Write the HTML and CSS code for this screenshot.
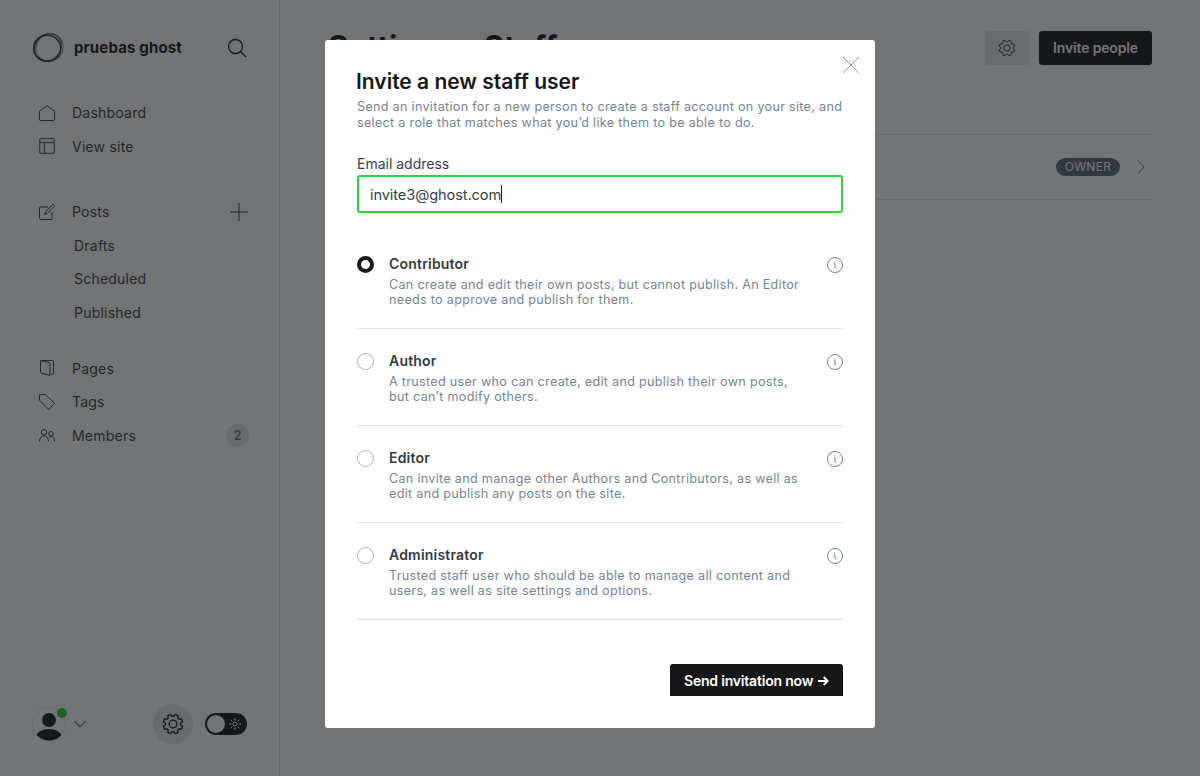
FILE: index.html
```
<!DOCTYPE html>
<html lang="en">
<head>
<meta charset="utf-8">
<title>Settings - Staff</title>
<link rel="stylesheet" href="styles.css">
</head>
<body>
<svg class="defs" width="0" height="0">
  <symbol id="gear" viewBox="0 0 24 24"><path stroke-linejoin="round" d="M20.250 12.870 22.500 14.520 21.210 17.640 18.450 17.220 17.220 18.450 17.640 21.210 14.520 22.500 12.870 20.250 11.130 20.250 9.480 22.500 6.360 21.210 6.780 18.450 5.550 17.220 2.790 17.640 1.500 14.520 3.750 12.870 3.750 11.130 1.500 9.480 2.790 6.360 5.550 6.780 6.780 5.550 6.360 2.790 9.480 1.500 11.130 3.750 12.870 3.750 14.520 1.500 17.640 2.790 17.220 5.550 18.450 6.780 21.210 6.360 22.500 9.480 20.250 11.130z"/><circle cx="12" cy="12" r="4.200"/></symbol>
  <symbol id="info" viewBox="0 0 18 18"><circle cx="9" cy="9" r="7.500"/><path d="M7.700 7.800H9v3.400c0 .7.500 1 1.400.8"/><path d="M8.700 5.200v1.100"/></symbol>
</svg>
<div class="app">
  <aside class="sidebar">
    <header class="brand">
      <svg class="logo" viewBox="0 0 32 32"><ellipse cx="15.200" cy="16.300" rx="13.600" ry="13" stroke-width="1.500" opacity=".8"/><ellipse cx="16.500" cy="15.500" rx="14.400" ry="12.500" transform="rotate(-50 16 16)" stroke-width="1.200" opacity=".6"/><ellipse cx="17" cy="14.800" rx="13.400" ry="13.900" transform="rotate(35 16 16)" stroke-width="1" opacity=".5"/></svg>
      <span class="brand-name">pruebas ghost</span>
      <svg class="search" viewBox="0 0 20 20"><circle cx="8.500" cy="8.500" r="7"/><path d="m13.500 13.500 5.500 5.500"/></svg>
    </header>
    <nav class="nav">
      <a class="item"><svg viewBox="0 0 16 16"><path d="M.5 6.200 8 .6l7.500 5.600v8.300a1 1 0 0 1-1 1h-13a1 1 0 0 1-1-1z"/></svg>Dashboard</a>
      <a class="item"><svg class="soft" viewBox="0 0 16 16"><rect x=".7" y=".7" width="14.600" height="14.600" rx="1.300"/><path d="M.7 4.500h14.600M5.500 4.500v10.800"/></svg>View site</a>
      <a class="item posts"><svg viewBox="0 0 16 16"><path d="M9 3H1.500a1 1 0 0 0-1 1v10.500a1 1 0 0 0 1 1H12a1 1 0 0 0 1-1V8M5.700 10.300l.7-2.600L13.600.7c.9-.7 2.400.7 1.600 1.700L8.100 9.500z"/></svg>Posts<svg class="plus" viewBox="0 0 18 18"><path d="M9 0v18M0 9h18"/></svg></a>
      <a class="item sub">Drafts</a>
      <a class="item sub">Scheduled</a>
      <a class="item sub">Published</a>
      <a class="item pages"><svg viewBox="0 0 16 16"><path d="M1.500.5h12a1 1 0 0 1 1 1v11.800a1 1 0 0 1-1 1h-2M2 .6l8 2a1.300 1.300 0 0 1 1 1.200v11.600l-8.500-2.200a1.300 1.300 0 0 1-1-1.200V1A.5.5 0 0 1 2 .6"/></svg>Pages</a>
      <a class="item"><svg viewBox="0 0 16 16"><path d="M.5 1.500a1 1 0 0 1 1-1h5l9 8.800-5.700 6.200L.5 6.200z"/></svg>Tags</a>
      <a class="item"><svg viewBox="0 0 16 16"><circle cx="5" cy="5.300" r="2.800"/><circle cx="12" cy="6.800" r="2.300"/><path d="M.5 14.300c0-7.200 9-7.200 9 0M10 10.300c2.600-1.600 5.500.2 5.500 4"/></svg>Members<b class="count">2</b></a>
    </nav>
    <footer class="user-bar">
      <div class="avatar"><svg viewBox="0 0 34 34"><defs><clipPath id="round"><circle cx="17" cy="17" r="16.500"/></clipPath></defs><circle class="ring" cx="17" cy="17" r="16.500"/><g clip-path="url(#round)"><circle cx="17" cy="13" r="7"/><ellipse cx="17" cy="30.500" rx="13" ry="8.500"/></g></svg><i class="online"></i></div>
      <svg class="chevron" viewBox="0 0 12 8"><path d="m.5 1 5.500 5.800L11.500 1"/></svg>
      <span class="settings"><svg><use href="#gear"/></svg></span>
      <span class="toggle"><i class="knob"></i><svg viewBox="0 0 12 12"><circle cx="6" cy="6" r="2"/><path d="M6 0v2.500M6 9.500V12M0 6h2.500M9.500 6H12M1.800 1.800l1.500 1.500M8.700 8.700l1.500 1.500M1.800 10.200l1.500-1.500M8.700 3.300l1.500-1.500"/></svg></span>
    </footer>
  </aside>
  <main class="content">
    <header class="page-head">
      <h1>Settings - Staff</h1>
      <span class="gear-button"><svg><use href="#gear"/></svg></span>
      <span class="invite-button">Invite people</span>
    </header>
    <div class="user-row"><span class="owner">OWNER</span><svg viewBox="0 0 8 14"><path d="m1 .5 6 6.500-6 6.500"/></svg></div>
  </main>
</div>
<div class="overlay">
  <section class="modal">
    <svg class="close" viewBox="0 0 16 16"><path d="m0 0 16 16M16 0 0 16"/></svg>
    <h2>Invite a new staff user</h2>
    <p class="intro">Send an invitation for a new person to create a staff account on your site, and<br>select a role that matches what you’d like them to be able to do.</p>
    <div class="label">Email address</div>
    <div class="field"><span>invite3@ghost.com</span><i class="caret"></i></div>
    <div class="roles">
      <div class="role"><i class="radio checked"></i><div class="role-text"><h3>Contributor</h3><p>Can create and edit their own posts, but cannot publish. An Editor<br>needs to approve and publish for them.</p></div><svg><use href="#info"/></svg></div>
      <div class="role"><i class="radio"></i><div class="role-text"><h3>Author</h3><p>A trusted user who can create, edit and publish their own posts,<br>but can’t modify others.</p></div><svg><use href="#info"/></svg></div>
      <div class="role"><i class="radio"></i><div class="role-text"><h3>Editor</h3><p>Can invite and manage other Authors and Contributors, as well as<br>edit and publish any posts on the site.</p></div><svg><use href="#info"/></svg></div>
      <div class="role"><i class="radio"></i><div class="role-text"><h3>Administrator</h3><p>Trusted staff user who should be able to manage all content and<br>users, as well as site settings and options.</p></div><svg><use href="#info"/></svg></div>
    </div>
    <div class="actions"><span class="send">Send invitation now <svg viewBox="0 0 11 10"><path d="M0 5h9.500M5.700 1l4 4-4 4"/></svg></span></div>
  </section>
</div>
</body>
</html>
```
FILE: styles.css
```
* { box-sizing: border-box; }
body { margin: 0; height: 776px; overflow: hidden; font-family: Inter, "Liberation Sans", sans-serif; color: #15171a; background: #fff; }
h1, h2, h3, p { margin: 0; }
svg { display: block; fill: none; stroke: currentColor; flex: none; }
.defs { position: absolute; }
.app { display: flex; height: 776px; }

.sidebar { width: 280px; border-right: 1px solid #e1e5e9; display: flex; flex-direction: column; }
.brand { display: flex; align-items: center; height: 32px; margin: 32px 32px 0; }
.logo { width: 32px; height: 32px; }
.brand-name { margin-left: 10px; padding-bottom: 2px; font-size: 15px; font-weight: 700; letter-spacing: .15px; white-space: nowrap; }
.search { width: 20px; height: 20px; margin-left: auto; stroke-width: 1.3; }
.nav { margin-top: 32px; }
.item { display: flex; align-items: center; height: 33.500px; padding: 0 31px 0 39px; font-size: 14px; letter-spacing: .22px; color: #394047; }
.item svg { width: 16px; height: 16px; margin-right: 17px; }
.item .soft { color: #626d79; stroke-width: 1.3; }
.item.posts { margin-top: 32px; }
.item.pages { margin-top: 22.500px; }
.item.sub { padding-left: 74px; }
.item .plus { width: 18px; height: 18px; margin: 0 0 0 auto; }
.count { width: 23px; height: 23px; margin: 0 -1px 0 auto; border-radius: 12px; background: #e6e9eb; color: #626d79; font-size: 13px; font-weight: 500; line-height: 23px; text-align: center; }
.user-bar { display: flex; align-items: center; height: 40px; margin: auto 32px 32px; }
.avatar { position: relative; width: 34px; height: 34px; }
.avatar svg { width: 34px; height: 34px; fill: #15171a; stroke: none; }
.avatar .ring { fill: none; stroke: #e5e9ed; }
.online { position: absolute; left: 25px; top: 1px; width: 10px; height: 10px; border-radius: 50%; background: #30cf43; }
.chevron { width: 12px; height: 8px; margin-left: 8px; }
.settings { display: grid; place-items: center; width: 40px; height: 40px; margin-left: auto; border-radius: 50%; background: #e6e9eb; }
.settings svg { width: 22px; height: 22px; stroke-width: 1.400; }
.toggle { display: flex; align-items: center; width: 42px; height: 22px; margin-left: 12px; padding: 0 6px 0 2px; border-radius: 11px; background: #15171a; color: #fff; }
.knob { width: 18px; height: 18px; margin-right: auto; border-radius: 50%; background: #fff; }
.toggle svg { width: 12px; height: 12px; }

.content { flex: 1; padding: 31px 48px 0; }
.page-head { display: flex; height: 34px; }
h1 { margin-right: auto; font-size: 31px; line-height: 32px; font-weight: 700; letter-spacing: .15px; }
.gear-button { display: grid; place-items: center; width: 44px; height: 34px; border-radius: 3px; background: #e6e9eb; color: #394047; }
.gear-button svg { width: 18px; height: 18px; stroke-width: 1.300; }
.invite-button { width: 113px; height: 34px; margin-left: 10px; border-radius: 3px; background: #15171a; color: #fff; font-size: 14px; font-weight: 600; letter-spacing: -.15px; line-height: 34px; text-align: center; white-space: nowrap; }
.user-row { display: flex; align-items: center; justify-content: flex-end; height: 66px; margin-top: 69px; padding-right: 7px; border-top: 1px solid #e1e5e9; border-bottom: 1px solid #e1e5e9; color: #626d79; }
.owner { width: 64px; height: 18px; margin-right: 17px; border-radius: 9px; background: #5d6a78; color: #fff; font-size: 12px; letter-spacing: .3px; line-height: 18px; text-align: center; }
.user-row svg { width: 8px; height: 14px; }

.overlay { position: absolute; inset: 0; padding-top: 40px; background: rgba(21, 23, 26, .6); }
.modal { position: relative; width: 550px; height: 688px; margin: 0 auto; padding: 28px 32px 32px; border-radius: 3px; background: #fff; display: flex; flex-direction: column; }
.close { position: absolute; top: 17px; right: 16px; width: 16px; height: 16px; color: #8a8c8e; stroke-width: .9; }
h2 { margin-left: -1px; font-size: 21px; line-height: 28px; font-weight: 600; white-space: nowrap; }
p { color: #738393; font-size: 12.600px; letter-spacing: .3px; white-space: nowrap; }
.intro { margin-top: 3px; line-height: 16px; }
.label { margin-top: 24px; color: #394047; font-size: 14px; line-height: 18px; }
.field { display: flex; align-items: center; height: 38px; margin-top: 2px; padding: 1px 11px 0; border: 2px solid #30cf43; border-radius: 3px; color: #394047; font-size: 14.600px; letter-spacing: -.1px; }
.caret { width: 1px; height: 18px; margin-top: -1px; background: #15171a; }
.roles { margin-top: 19px; }
.role { display: flex; height: 97px; padding-top: 24px; border-bottom: 1px solid #e1e4e7; }
.radio { width: 17px; height: 17px; border: 1px solid #a6b3bf; border-radius: 50%; }
.radio.checked { border: 4px solid #15171a; }
.role-text { flex: 1; margin-left: 15px; }
h3 { margin-top: -1px; color: #343a40; font-size: 14px; font-weight: 600; line-height: 18px; letter-spacing: .2px; }
.role p { margin-top: 4px; line-height: 15px; }
.role svg { width: 18px; height: 18px; margin-right: -1px; color: #738393; }
.actions { display: flex; justify-content: flex-end; margin-top: auto; }
.send { display: flex; align-items: center; width: 173px; height: 32px; padding: 1px 14px 0; border-radius: 3px 3px 0 0; background: #15171a; color: #fff; font-size: 14px; font-weight: 600; letter-spacing: -.2px; white-space: nowrap; }
.send svg { width: 11px; height: 10px; margin-left: auto; stroke-width: 1.800; }
```
